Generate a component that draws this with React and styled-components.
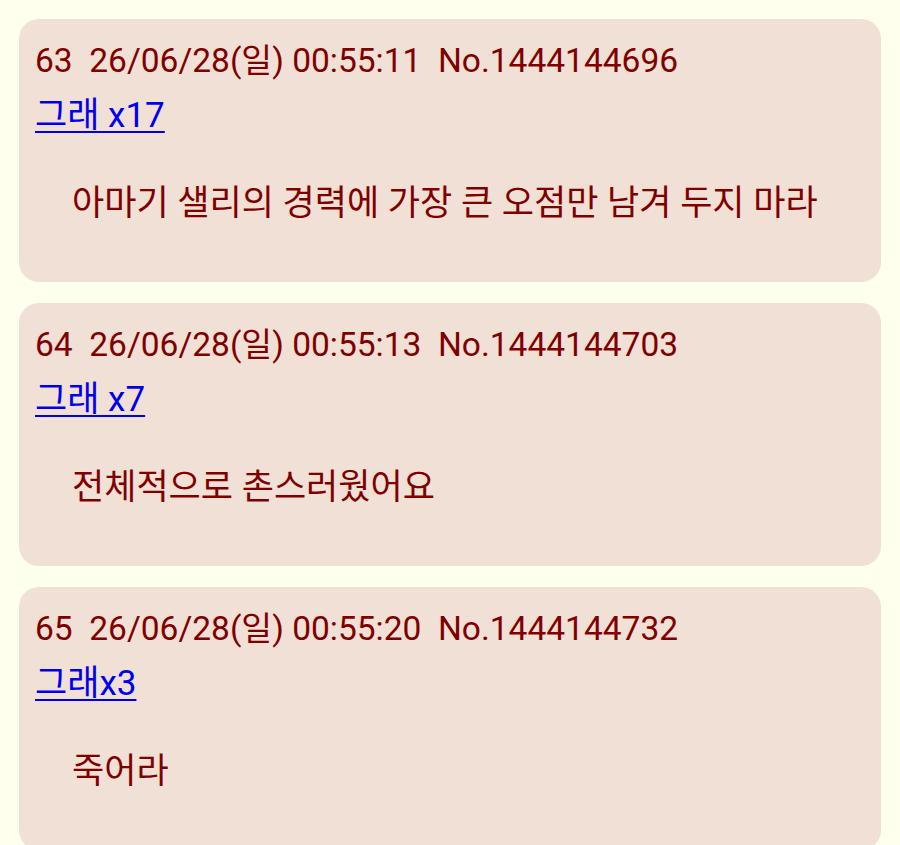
import React from "react";
import styled, { createGlobalStyle } from "styled-components";

const Global = createGlobalStyle`
  html, body {
    margin: 0;
    padding: 0;
    background: #ffffee;
  }
  body {
    font-family: Roboto, "Noto Sans CJK KR", sans-serif;
    color: #800000;
  }
`;

const Thread = styled.div`
  display: flex;
  flex-direction: column;
  gap: 21px;
  padding: 0 19px;
  height: 845px;
  overflow: hidden;
`;

const PrevTail = styled.div`
  height: 1px;
  margin: 0 20px -2px;
  background: #f2ece0;
`;

const Reply = styled.article`
  flex-shrink: 0;
  background: #f0e0d6;
  border-radius: 20px;
  padding: 20px 16px 56px;
`;

const Header = styled.div`
  font-size: 33.5px;
  line-height: 44px;
  white-space: pre;
`;

const Quote = styled.a`
  display: inline-block;
  margin-top: 11px;
  font-size: 35px;
  line-height: 44px;
  color: #0000ee;
  text-decoration: underline;
  text-decoration-thickness: 2px;
  text-underline-offset: 4px;
`;

const Body = styled.div`
  margin-top: 44px;
  padding-left: 37px;
  font-size: 35px;
  line-height: 44px;
`;

const replies = [
  {
    no: 63,
    time: "00:55:11",
    id: "1444144696",
    quote: "그래 x17",
    text: "아마기 샐리의 경력에 가장 큰 오점만 남겨 두지 마라",
  },
  {
    no: 64,
    time: "00:55:13",
    id: "1444144703",
    quote: "그래 x7",
    text: "전체적으로 촌스러웠어요",
  },
  {
    no: 65,
    time: "00:55:20",
    id: "1444144732",
    quote: "그래x3",
    text: "죽어라",
  },
];

export default function App() {
  return (
    <>
      <Global />
      <Thread>
        <PrevTail />
        {replies.map((r) => (
          <Reply key={r.no}>
            <Header>{`${r.no}  26/06/28(일) ${r.time}  No.${r.id}`}</Header>
            <div>
              <Quote href="#">{r.quote}</Quote>
            </div>
            <Body>{r.text}</Body>
          </Reply>
        ))}
      </Thread>
    </>
  );
}
